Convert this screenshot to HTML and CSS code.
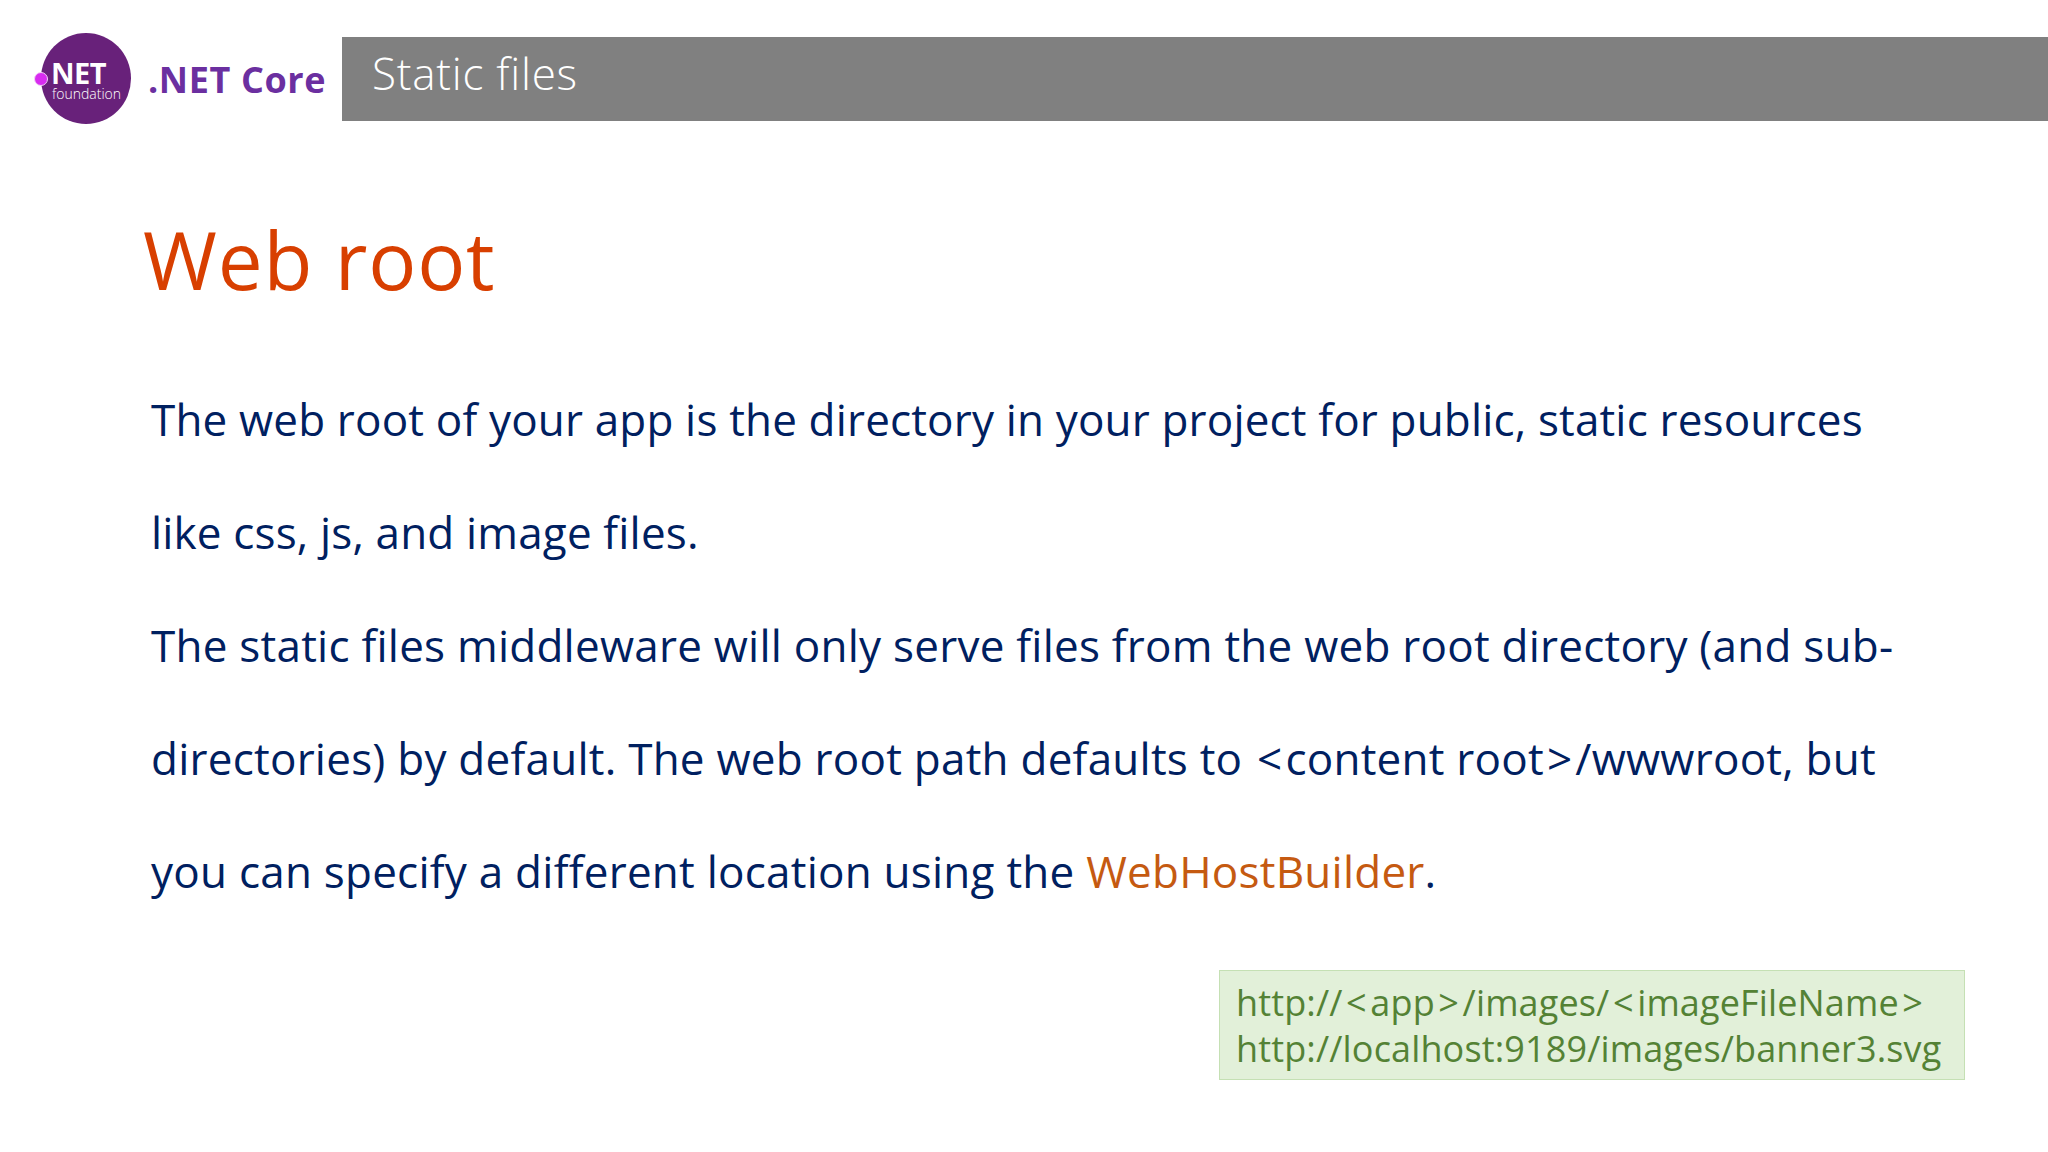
FILE: index.html
```html
<!DOCTYPE html>
<html lang="en">
<head>
<meta charset="utf-8">
<title>Static files</title>
<link rel="stylesheet" href="styles.css">
</head>
<body>
<div class="slide">
  <header class="header">
    <div class="logo-badge">
      <span class="logo-dot"></span>
      <span class="logo-net">NET</span>
      <span class="logo-foundation">foundation</span>
    </div>
    <div class="brand">.NET Core</div>
    <div class="bar">Static files</div>
  </header>
  <h1 class="title">Web root</h1>
  <div class="body">
    <p class="para">The web root of your app is the directory in your project for public, static resources<br>like css, js, and image files.</p>
    <p class="para para-wide">The static files middleware will only serve files from the web root directory (and sub-<br>directories) by default. The web root path defaults to <span class="ang">&lt;</span>content root<span class="ang">&gt;</span>/wwwroot, but<br>you can specify a different location using the <span class="link">WebHostBuilder</span>.</p>
  </div>
  <div class="callout">http://<span class="ang">&lt;</span>app<span class="ang">&gt;</span>/images/<span class="ang">&lt;</span>imageFileName<span class="ang">&gt;</span><br>http://localhost:9189/images/banner3.svg</div>
</div>
</body>
</html>
```
FILE: styles.css
```css
* { box-sizing: border-box; }
html, body { margin: 0; padding: 0; }
body { background: #fff; font-family: "Open Sans", "Noto Sans", sans-serif; }
.slide { width: 2048px; height: 1152px; overflow: hidden; display: flex; flex-direction: column; }
.header { display: flex; align-items: flex-start; padding: 33px 0 0 41px; height: 124px; }
.logo-badge { position: relative; width: 90px; height: 91px; flex: none; border-radius: 50%; background: #68217a; color: #fff; }
.logo-dot { position: absolute; left: -7px; top: 39px; width: 14px; height: 14px; border-radius: 50%; background: #d82cf0; border: 1px solid #f3d0f7; }
.logo-net { position: absolute; left: 10px; top: 27px; font: 700 29px/26px "Open Sans", sans-serif; letter-spacing: -0.5px; }
.logo-foundation { position: absolute; left: 11px; top: 53px; font: 300 14px/15px "Open Sans", sans-serif; }
.brand { margin: 24px 0 0 17px; width: 194px; flex: none; color: #6b2fa0; font: 700 36px/46px "Open Sans", sans-serif; letter-spacing: 0.6px; white-space: nowrap; }
.bar { margin-top: 4px; flex: 1; height: 84px; background: #808080; color: #fff; padding-left: 30px; font: 300 44px/72px "Open Sans", sans-serif; letter-spacing: 0.75px; }
.title { margin: 85px 0 0 143px; color: #d83f00; font: 400 80px/100px "Open Sans", sans-serif; letter-spacing: 0.8px; }
.body { margin: 54px 0 0 151px; color: #002060; font-size: 44px; line-height: 113px; letter-spacing: 0.17px; white-space: nowrap; }
.para { margin: 0; }
.para-wide { letter-spacing: 0.24px; }
.link { color: #c55a11; }
.ang { margin: 0 3px; }
.callout { align-self: flex-start; margin: 42px 0 0 1219px; width: 746px; height: 110px; padding: 9px 0 0 16px; background: #e2f0d9; border: 1px solid #c5e0b4; color: #548235; font-size: 36px; line-height: 46px; letter-spacing: 0.14px; white-space: nowrap; }
.callout .ang { margin: 0 3.5px; }
```
